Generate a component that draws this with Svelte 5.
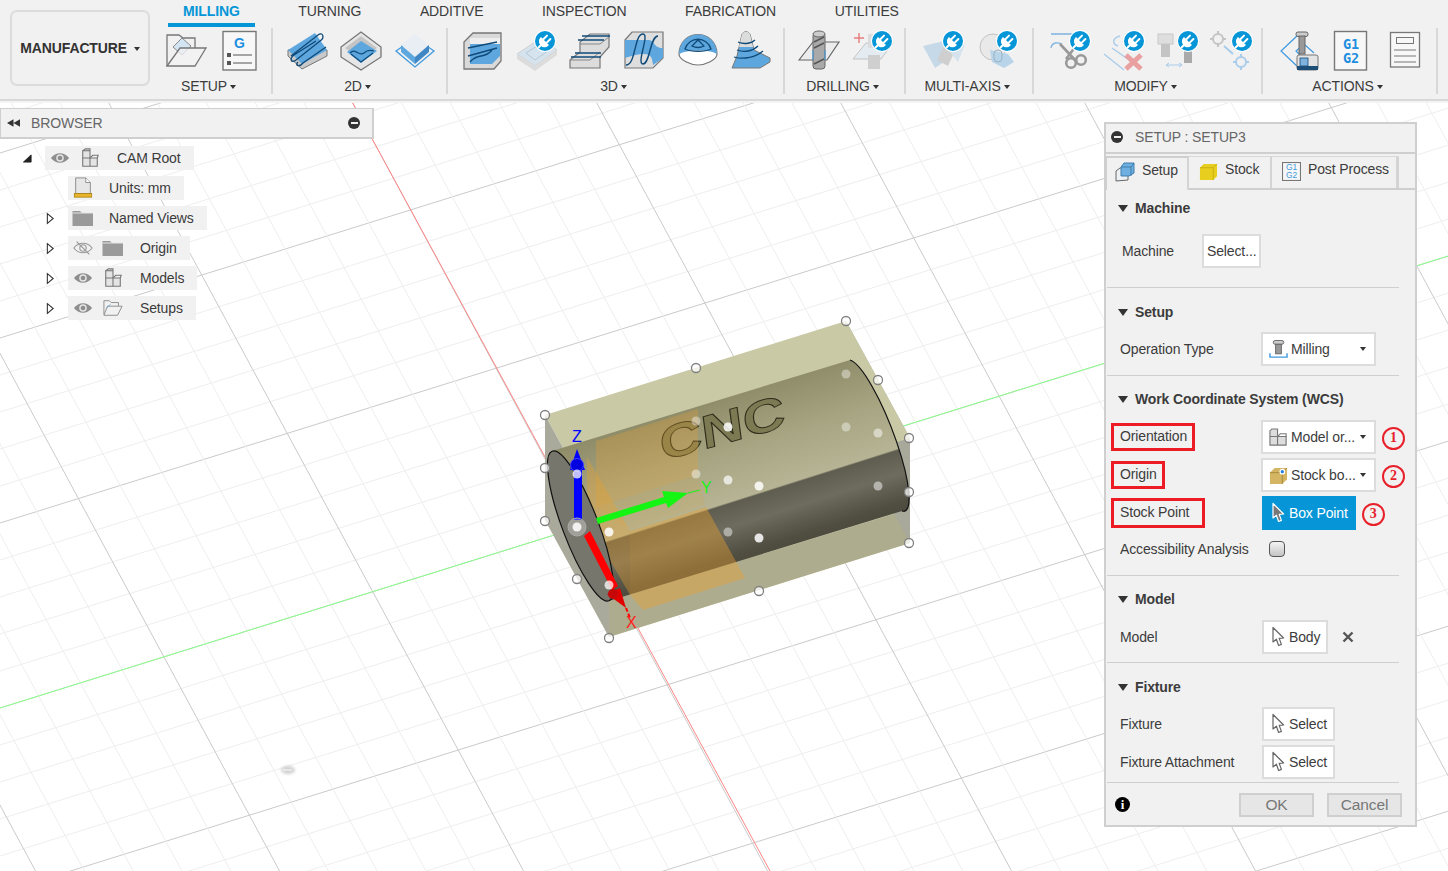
<script>
    // viewport grid: two families of parallel lines, every 5th line is a major one
    const across = []
    for (let k = -5; k < 45; k++) {
        const b = 338 + (k - 10) * 37
        across.push({ b, major: k % 5 === 0 })
    }
    const down = []
    for (let k = -25; k < 35; k++) {
        const c = 470 + k * 48.8
        down.push({ c, major: k % 5 === 0 })
    }

    const holes = [[846,321],[696,368],[545,415],[878,380],[909,438],[909,492],[909,543],[759,591],[609,638],[545,468],[545,521],[577,579]]
    // third value: how much the point shows through the body
    const dots = [[696,421,0.4],[728,427,0.85],[846,374,0.4],[846,427,0.4],[878,433,0.5],[696,474,0.45],[728,480,0.7],[759,486,0.85],[878,486,0.5],[728,532,0.45],[759,538,0.85],[609,532,0.85],[609,585,0.75],[577,474,0.75],[577,527,0.85]]

    const tree = [
        { name: 'CAM Root', icon: 'cube', eye: 'on', open: true, root: true },
        { name: 'Units: mm', icon: 'units' },
        { name: 'Named Views', icon: 'folder', arrow: true },
        { name: 'Origin', icon: 'folder', eye: 'off', arrow: true },
        { name: 'Models', icon: 'cube', eye: 'on', arrow: true },
        { name: 'Setups', icon: 'open', eye: 'on', arrow: true }
    ]
</script>

{#snippet plug()}
    <svg class="plug" viewBox="0 0 22 22">
        <circle cx="11" cy="11" r="11" fill="#fff"/>
        <circle cx="11" cy="11" r="10" fill="#0696d7"/>
        <path d="M4.5 17.5 L7.5 14.5 M7 8.5 L13.5 15 C11.5 17 9 16.5 7.5 15 C6 13.5 5 10.5 7 8.5 Z M9.6 9 L13 5.6 M13 12.4 L16.4 9" fill="#fff" stroke="#fff" stroke-width="2" stroke-linecap="round"/>
    </svg>
{/snippet}

{#snippet pointer()}
    <svg class="pointer" viewBox="0 0 14 22">
        <path d="M2 1.5 V16 L5.4 13.2 L7.6 19.5 L10.4 18.4 L8.2 12.4 L12.6 12 Z" fill="#fff" stroke="#666" stroke-width="1.2" stroke-linejoin="round"/>
    </svg>
{/snippet}

{#snippet cubeIcon()}
    <svg class="tree-icon" viewBox="0 0 22 22">
        <path d="M3 3 L6 1 H11 V11 H19 V20 H3 Z" fill="#e4e4e4" stroke="#777" stroke-width="1.2"/>
        <path d="M3 11 H11 V20 M11 11 L14 8 H20 L19 11" fill="none" stroke="#777" stroke-width="1.2"/>
        <path d="M3 3 H11" stroke="#777" stroke-width="1.2"/>
    </svg>
{/snippet}

{#snippet eye(off)}
    <svg class="tree-icon" viewBox="0 0 22 22">
        {#if off}
            <path d="M1 11 C6 4 16 4 21 11 C16 18 6 18 1 11 Z" fill="none" stroke="#999" stroke-width="1.2"/>
            <circle cx="11" cy="11" r="3.5" fill="none" stroke="#999" stroke-width="1.2"/>
            <path d="M4 4 L18 18" stroke="#999" stroke-width="1.3"/>
        {:else}
            <path d="M1 11 C6 4 16 4 21 11 C16 18 6 18 1 11 Z" fill="#8e8e8e"/>
            <circle cx="11" cy="11" r="4.2" fill="#e4e4e4"/>
            <circle cx="11" cy="11" r="2.6" fill="#8e8e8e"/>
        {/if}
    </svg>
{/snippet}

<div class="app">
    <!-- viewport: the model sits on a free canvas -->
    <svg class="scene" viewBox="0 0 1448 871">
        {#each across as l}
            <line x1="0" y1={l.b} x2="1448" y2={l.b - 0.312 * 1448} stroke={l.major ? '#cacaca' : '#eeeeee'}/>
        {/each}
        {#each down as l}
            <line x1={l.c + 0.54 * (100 - 320)} y1="100" x2={l.c + 0.54 * (871 - 320)} y2="871" stroke={l.major ? '#cacaca' : '#eeeeee'}/>
        {/each}
        <line x1="0" y1="708" x2="1448" y2="256" stroke="#8cff8c"/>
        <line x1="351" y1="100" x2="770" y2="871" stroke="#ff8585"/>
        <ellipse class="smudge" cx="288" cy="770" rx="7" ry="4" fill="#d0d0d0"/>
        <line x1="283" y1="770" x2="292" y2="770" stroke="#fff"/>

        <defs>
            <linearGradient id="body" gradientUnits="userSpaceOnUse" x1="702" y1="404" x2="755" y2="571">
                <stop offset="0" stop-color="#8f8c69"/>
                <stop offset="0.3" stop-color="#a6a481"/>
                <stop offset="0.58" stop-color="#b6b494"/>
                <stop offset="0.59" stop-color="#5f5d4f"/>
                <stop offset="0.72" stop-color="#6d6c5e"/>
                <stop offset="0.88" stop-color="#504d41"/>
                <stop offset="1" stop-color="#48453a"/>
            </linearGradient>
        </defs>

        <!-- stock box -->
        <polygon points="545,520 609,637 910,543 846,426" fill="#d3d3b4"/>
        <polygon points="609,637 910,543 900,512 609,601" fill="#aeac8e"/>
        <polygon points="846,321 910,438 910,543 846,426" fill="#a8a89b"/>
        <polygon points="545,415 846,321 910,438 609,532" fill="#c9c9a6"/>
        <polygon points="545,415 545,520 609,637 609,532" fill="#a9a99c"/>

        <!-- cylinder -->
        <path d="M552 451 L850 360 A 80 17 69 0 1 902 511 L609 601 Z" fill="url(#body)"/>
        <path d="M850 360 A 80 17 69 0 1 902 511" fill="none" stroke="#111" stroke-width="1.2"/>
        <text class="engraved" transform="translate(662,461) rotate(-15.5) skewX(-8) scale(1.3,1)" font-size="46">CNC</text>

        <!-- orange setup planes -->
        <polygon points="596,441 698,409 698,475 596,507" fill="#e8a030" fill-opacity="0.28"/>
        <polygon points="596,507 698,475 705,505 630,530" fill="#e8a030" fill-opacity="0.14"/>
        <polygon points="630,531 706,507 745,578 643,610 630,595" fill="#e8a030" fill-opacity="0.42"/>
        <polygon points="587,457 630,531 630,595 587,520" fill="#e8a030" fill-opacity="0.36"/>

        <ellipse cx="580.5" cy="526" rx="18" ry="80" transform="rotate(-20.8 580.5 526)" fill="#77766c" stroke="#111" stroke-width="1.2"/>

        <!-- axes -->
        <rect x="574" y="462" width="8" height="58" fill="#0000ff"/>
        <polygon points="577,449 570,470 585,470" fill="#0000ff"/>
        <circle cx="577" cy="465" r="6.5" fill="#0000e0" stroke="#4444ff"/>
        <text class="axis" x="572" y="442" fill="#0000ff">Z</text>
        <polygon points="596,518 664,497 662,491 688,493 668,508 666,503 598,524" fill="#14f514"/>
        <line x1="688" y1="493" x2="700" y2="490" stroke="#14f514"/>
        <text class="axis" x="701" y="493" fill="#14f514">Y</text>
        <polygon points="584,536 590,531 618,586 612,590" fill="#ff0000"/>
        <polygon points="607,594 620,588 626,608" fill="#e00000"/>
        <circle cx="613" cy="594" r="5" fill="#c80808"/>
        <line x1="626" y1="608" x2="630" y2="618" stroke="#ff0000" stroke-width="2" stroke-dasharray="4 2"/>
        <text class="axis" x="626" y="628" fill="#ff2020">X</text>

        {#each holes as [x, y]}
            <circle cx={x} cy={y} r="4.5" fill="#fff" fill-opacity="0.75" stroke="#808080" stroke-width="1.3"/>
        {/each}
        <circle cx="577" cy="527" r="9" fill="#fff" fill-opacity="0.3" stroke="#aaa"/>
        {#each dots as [x, y, o]}
            <circle cx={x} cy={y} r="4.5" fill="#fff" fill-opacity={o}/>
        {/each}
    </svg>

    <header class="toolbar">
        <button class="manufacture">MANUFACTURE <i class="caret"></i></button>
        <div class="ribbon">
            <nav class="tabs">
                <span class="tab active">MILLING</span>
                <span class="tab">TURNING</span>
                <span class="tab">ADDITIVE</span>
                <span class="tab">INSPECTION</span>
                <span class="tab">FABRICATION</span>
                <span class="tab">UTILITIES</span>
            </nav>
            <div class="groups">
                <section class="group">
                    <div class="tools">
                        <div class="tool"><svg viewBox="159 28 54 44">
                            <path d="M167 66 V35 H179 L183 38 H195 V48" fill="none" stroke="#777" stroke-width="1.3"/>
                            <path d="M173 47 L182 38 L191 46 L182 55 Z" fill="#d3e4f2" stroke="#888"/>
                            <path d="M167 66 L180 48 H206 L195 66 Z" fill="#f1f1f1" fill-opacity="0.75" stroke="#777" stroke-width="1.3"/>
                        </svg></div>
                        <div class="tool"><svg viewBox="213 28 54 44">
                            <rect x="223" y="31.5" width="33" height="38.5" fill="#f7f7f7" stroke="#777" stroke-width="1.4"/>
                            <text x="234" y="48" class="g-mark" font-size="14">G</text>
                            <rect x="227" y="53" width="4" height="4" fill="#555"/>
                            <rect x="227" y="61" width="4" height="4" fill="#555"/>
                            <path d="M233 55 H252 M233 63 H252" stroke="#555"/>
                        </svg></div>
                    </div>
                    <div class="label">SETUP<i class="caret"></i></div>
                </section>
                <section class="group">
                    <div class="tools">
                        <div class="tool"><svg viewBox="281 28 54 44">
                            <path d="M288 50 V56 L302 69 L327 56 V50 Z" fill="#c9c9c9" stroke="#777"/>
                            <polygon points="288,50 315,33 327,50 302,64" fill="#5ea7de"/>
                            <path d="M291 56 L318 35 C323 31 325 38 320 41 L296 60 C291 64 289 59 294 55 L316 41 M298 62 C294 66 300 67 303 63 L326 47" fill="none" stroke="#0f4a78" stroke-width="1.3"/>
                        </svg></div>
                        <div class="tool"><svg viewBox="335 28 54 44">
                            <polygon points="361,32 381,47 381,57 361,70 341,57 341,47" fill="#e6e6e6" stroke="#777" stroke-width="1.3"/>
                            <polygon points="361,36 377,48 361,60 345,48" fill="#c4c4c4"/>
                            <polygon points="361,41 377,51 361,63 347,52" fill="#5ea7de"/>
                            <path d="M350 53 C356 47 358 57 364 53 C367 50 371 50 374 51 M351 54 L361 62 L373 53" fill="none" stroke="#0f4a78" stroke-width="1.2"/>
                        </svg></div>
                        <div class="tool"><svg viewBox="389 28 54 44">
                            <polygon points="396,51 415,38 434,51 415,67" fill="none" stroke="#3f9ae0" stroke-width="1.3"/>
                            <polygon points="401,45 415,34 429,45 415,57" fill="#e8eef4"/>
                            <polygon points="401,45 415,57 415,64 401,52" fill="#5ea7de"/>
                            <polygon points="429,45 415,57 415,64 429,52" fill="#3f87c4"/>
                        </svg></div>
                    </div>
                    <div class="label">2D<i class="caret"></i></div>
                </section>
                <section class="group">
                    <div class="tools">
                        <div class="tool"><svg viewBox="455 28 54 44">
                            <path d="M464 42 L473 33 H501 V61 L494 69 H464 Z" fill="#d9d9d9" stroke="#777" stroke-width="1.3"/>
                            <path d="M470 38 H500 V44 H470 Z" fill="#eee"/>
                            <path d="M470 44 H500 V56 L492 64 H470 Z" fill="#5ea7de"/>
                            <path d="M468 48 L497 42 M468 56 L497 48 M470 62 C478 52 484 60 492 50" fill="none" stroke="#0f4a78" stroke-width="1.3"/>
                        </svg></div>
                        <div class="tool"><svg viewBox="509 28 54 44">
                            <g opacity="0.38">
                                <polygon points="517,54 541,38 557,50 535,66" fill="#a9cdea" stroke="#999"/>
                                <polygon points="517,54 535,66 557,50 557,55 535,71 517,59" fill="#bbb"/>
                                <path d="M526 53 L540 44 L549 50 L535 60 Z" fill="none" stroke="#5a86aa"/>
                            </g>
                        </svg>{@render plug()}</div>
                        <div class="tool"><svg viewBox="563 28 54 44">
                            <path d="M570 60 L580 52 L580 42 L590 34 H609 V47 L600 57 V68 H570 Z" fill="#dcdcdc" stroke="#777" stroke-width="1.2"/>
                            <path d="M580 44 H600 L609 37 M570 60 H590 L600 52" fill="none" stroke="#888"/>
                            <path d="M578 40 H604 M582 36 H610 M571 57 H601 M575 53 H601" stroke="#0f4a78" stroke-width="1.4"/>
                        </svg></div>
                        <div class="tool"><svg viewBox="617 28 54 44">
                            <path d="M625 40 L632 32 H663 V58 L653 68 H625 Z" fill="#dedede" stroke="#777" stroke-width="1.2"/>
                            <path d="M625 40 H648 C655 40 653 48 663 48 V58 L653 65 C652 55 650 50 625 58 Z" fill="#5ea7de"/>
                            <path d="M626 65 C636 65 634 34 643 34 C650 34 636 64 643 64 C650 64 650 36 658 36" fill="none" stroke="#0f4a78" stroke-width="1.4"/>
                        </svg></div>
                        <div class="tool"><svg viewBox="671 28 54 44">
                            <path d="M679 54 C680 28 716 28 717 54 C717 60 705 65 698 65 C691 65 679 60 679 54 Z" fill="#fff" stroke="#777" stroke-width="1.2"/>
                            <path d="M679 54 C680 28 716 28 717 54 C708 49 690 49 679 54 Z" fill="#5ea7de"/>
                            <path d="M685 49 C689 36 707 36 711 49 C705 52 691 52 685 49 Z M692 46 L698 40 L704 46 C700 48 696 48 692 46 Z" fill="none" stroke="#0f4a78" stroke-width="1.3"/>
                        </svg></div>
                        <div class="tool"><svg viewBox="725 28 54 44">
                            <path d="M732 68 L737 56 L742 34 C744 31 748 31 750 34 L754 50 L770 58 V62 L760 68 Z" fill="#5ea7de" stroke="#777"/>
                            <path d="M742 34 C744 31 748 31 750 34 L753 47 L739 47 Z" fill="#dcdcdc"/>
                            <path d="M738 42 C745 45 752 43 755 40 M737 50 C744 53 753 51 758 46 M734 57 C744 60 756 57 763 51" fill="none" stroke="#0f4a78" stroke-width="1.3"/>
                        </svg></div>
                    </div>
                    <div class="label">3D<i class="caret"></i></div>
                </section>
                <section class="group">
                    <div class="tools">
                        <div class="tool"><svg viewBox="792 28 54 44">
                            <path d="M799 60 L813 42 H839 L827 60 Z" fill="#ececec" stroke="#666" stroke-width="1.2"/>
                            <rect x="813" y="33" width="12" height="36" rx="3" fill="#a9a9a9" stroke="#666"/>
                            <ellipse cx="819" cy="34" rx="6" ry="3" fill="#ccc" stroke="#666"/>
                            <path d="M814 42 L824 37 M814 48 L824 43 M814 64 L824 59" stroke="#555" stroke-width="1.6"/>
                            <path d="M813 50 V60 M825 50 V60" stroke="#3f9ae0"/>
                        </svg></div>
                        <div class="tool"><svg viewBox="846 28 54 44">
                            <path d="M854 38 H864 M859 33 V43" stroke="#e03030" stroke-width="1.4" opacity="0.6"/>
                            <g opacity="0.38">
                                <path d="M853 59 L866 43 H893 L881 59 Z" fill="#d3e4f2" stroke="#777"/>
                                <rect x="868" y="55" width="12" height="14" fill="#999"/>
                                <rect x="868" y="34" width="12" height="14" fill="#bbb"/>
                            </g>
                        </svg>{@render plug()}</div>
                    </div>
                    <div class="label">DRILLING<i class="caret"></i></div>
                </section>
                <section class="group">
                    <div class="tools">
                        <div class="tool"><svg viewBox="917 28 54 44">
                            <g opacity="0.38">
                                <polygon points="923,46 948,40 950,58 935,68" fill="#7fb3de"/>
                                <path d="M937 60 L950 34 L960 40 L948 66 Z" fill="#999"/>
                                <polygon points="950,52 965,44 958,62" fill="#a9cdea"/>
                            </g>
                        </svg>{@render plug()}</div>
                        <div class="tool"><svg viewBox="971 28 54 44">
                            <g opacity="0.38">
                                <circle cx="993" cy="47" r="13" fill="#ddd" stroke="#777"/>
                                <path d="M990 50 L1008 54 L1014 62 L1004 68 L992 62 Z" fill="#5ea7de"/>
                                <rect x="994" y="50" width="8" height="12" rx="4" fill="none" stroke="#0f4a78"/>
                            </g>
                        </svg>{@render plug()}</div>
                    </div>
                    <div class="label">MULTI-AXIS<i class="caret"></i></div>
                </section>
                <section class="group">
                    <div class="tools">
                        <div class="tool"><svg viewBox="1044 28 54 44">
                            <path d="M1051 34 H1075 M1051 48 C1052 42 1058 42 1062 44" fill="none" stroke="#7fb3de" stroke-width="1.3"/>
                            <path d="M1060 44 L1076 61 M1076 46 L1066 59" stroke="#999" stroke-width="2.6"/>
                            <circle cx="1071" cy="63" r="4.8" fill="none" stroke="#999" stroke-width="2.6"/>
                            <circle cx="1081" cy="60" r="4.8" fill="none" stroke="#999" stroke-width="2.6"/>
                        </svg>{@render plug()}</div>
                        <div class="tool"><svg viewBox="1098 28 54 44">
                            <path d="M1104 54 L1124 70 M1112 48 L1132 62 M1120 36 C1112 38 1112 44 1118 46" fill="none" stroke="#a9cdea" stroke-width="1.4"/>
                            <path d="M1126 55 L1141 69 M1141 55 L1126 69" stroke="#e9a0a0" stroke-width="5"/>
                        </svg>{@render plug()}</div>
                        <div class="tool"><svg viewBox="1152 28 54 44">
                            <rect x="1158" y="34" width="15" height="10" fill="#dedede" stroke="#c8c8c8"/>
                            <rect x="1161" y="44" width="9" height="13" fill="#c4c4c4"/>
                            <rect x="1184" y="48" width="8" height="15" fill="#aaa"/>
                            <path d="M1166 65 H1182 M1166 65 L1169 63 M1166 65 L1169 67 M1182 65 L1179 63 M1182 65 L1179 67" fill="none" stroke="#a9cdea"/>
                        </svg>{@render plug()}</div>
                        <div class="tool"><svg viewBox="1206 28 54 44">
                            <g fill="none" stroke="#c4c4c4" stroke-width="2">
                                <circle cx="1218" cy="39" r="5"/>
                                <path d="M1218 31 V34 M1218 44 V47 M1210 39 H1213 M1223 39 H1226"/>
                            </g>
                            <g fill="none" stroke="#a9cdea" stroke-width="2">
                                <circle cx="1241" cy="62" r="5"/>
                                <path d="M1241 54 V57 M1241 67 V70 M1233 62 H1236 M1246 62 H1249 M1224 46 L1233 54"/>
                            </g>
                        </svg>{@render plug()}</div>
                    </div>
                    <div class="label">MODIFY<i class="caret"></i></div>
                </section>
                <section class="group">
                    <div class="tools">
                        <div class="tool"><svg viewBox="1273 28 54 44">
                            <path d="M1298 35 L1281 51 L1298 67 M1303 45 L1296 51 L1303 58 M1305 45 L1314 53" fill="none" stroke="#3f9ae0" stroke-width="1.2"/>
                            <rect x="1296" y="32" width="12" height="4.5" rx="2" fill="#ccc" stroke="#666"/>
                            <rect x="1299" y="36" width="6" height="18" fill="#999" stroke="#666"/>
                            <rect x="1297" y="55" width="21" height="15" rx="2" fill="#e4e4e4" stroke="#777"/>
                            <rect x="1300" y="58" width="8" height="8" fill="#7fb3de" stroke="#0f4a78" stroke-width="0.8"/>
                            <rect x="1297" y="66" width="21" height="4" fill="#1d4e78"/>
                        </svg></div>
                        <div class="tool"><svg viewBox="1327 28 54 44">
                            <rect x="1334.5" y="31.5" width="32" height="38.5" fill="#f7f7f7" stroke="#777" stroke-width="1.4"/>
                            <text x="1351" y="49" class="g-code" font-size="13.5">G1</text>
                            <text x="1351" y="63" class="g-code" font-size="13.5">G2</text>
                        </svg></div>
                        <div class="tool"><svg viewBox="1381 28 54 44">
                            <rect x="1390.5" y="32.5" width="29" height="34.5" fill="#f7f7f7" stroke="#777" stroke-width="1.3"/>
                            <rect x="1396.5" y="37.5" width="17" height="6" fill="none" stroke="#777"/>
                            <path d="M1394 50 H1416 M1394 56 H1416 M1394 62 H1416" stroke="#777"/>
                        </svg></div>
                    </div>
                    <div class="label">ACTIONS<i class="caret"></i></div>
                </section>
            </div>
        </div>
    </header>

    <aside class="browser">
        <div class="browser-head">
            <svg class="rewind" viewBox="0 0 14 8"><path d="M7 0 V8 L0 4 Z M14 0 V8 L7 4 Z" fill="#333"/></svg>
            <span class="browser-title">BROWSER</span>
            <span class="minus"></span>
        </div>
        <ul class="tree">
            {#each tree as node}
                <li class="node" class:root={node.root}>
                    <span class="expander">
                        {#if node.open}
                            <svg viewBox="0 0 10 10"><path d="M0.5 9 H9 V1 Z" fill="#222" stroke="#222"/></svg>
                        {:else if node.arrow}
                            <svg viewBox="0 0 10 14"><path d="M1.5 1.5 L8 7 L1.5 12.5 Z" fill="#fff" stroke="#333" stroke-width="1.2"/></svg>
                        {/if}
                    </span>
                    <span class="pill">
                        {#if node.eye}
                            <span class="slot">{@render eye(node.eye === 'off')}</span>
                        {/if}
                        <span class="slot">
                            {#if node.icon === 'cube'}
                                {@render cubeIcon()}
                            {:else if node.icon === 'units'}
                                <svg class="tree-icon large" viewBox="0 0 22 24">
                                    <path d="M3 1 H14 L19 6 V18 H3 Z" fill="#e6e6e6" stroke="#888"/>
                                    <path d="M14 1 V6 H19" fill="#fff" stroke="#888"/>
                                    <rect x="1.5" y="18" width="19" height="4" fill="#e9b32a" stroke="#a67c10" stroke-width="0.8"/>
                                </svg>
                            {:else if node.icon === 'folder'}
                                <svg class="tree-icon large" viewBox="0 0 22 20">
                                    <path d="M0.5 3 H8 L10 5 H21 V18 H0.5 Z" fill="#9a9a9a"/>
                                    <path d="M0.5 5 H21" stroke="#e4e4e4"/>
                                </svg>
                            {:else}
                                <svg class="tree-icon" viewBox="0 0 22 20">
                                    <path d="M1 17 V2 H7 L9 4 H17 V8" fill="none" stroke="#888"/>
                                    <path d="M1 18 L5 8 H21 L16 18 Z" fill="#f1f1f1" stroke="#888"/>
                                    <path d="M4 10 L8 6" stroke="#5ea7de"/>
                                </svg>
                            {/if}
                        </span>
                        <span class="node-name">{node.name}</span>
                    </span>
                </li>
            {/each}
        </ul>
    </aside>

    <aside class="panel">
        <div class="panel-head">
            <span class="minus"></span>
            <span class="panel-title">SETUP : SETUP3</span>
        </div>
        <div class="panel-tabs">
            <span class="ptab active">
                <svg class="ptab-icon" viewBox="0 0 20 20">
                    <path d="M1 9 L5 6 H13 V18 L1 19 Z" fill="#eef1f4" stroke="#666"/>
                    <path d="M6 5 L9 1 H19 V11 L14 14 H6 Z" fill="#6fb0e0" stroke="#3f7eb0"/>
                    <path d="M6 5 H16 L19 1 M16 5 V14" fill="none" stroke="#3f7eb0"/>
                </svg>
                Setup
            </span>
            <span class="ptab">
                <svg class="ptab-icon" viewBox="0 0 20 20">
                    <path d="M1 6 L5 2 H19 V15 L15 19 H1 Z" fill="#e8cf1f"/>
                    <path d="M1 6 H15 L19 2 M15 6 V19" fill="none" stroke="#c9b010"/>
                </svg>
                Stock
            </span>
            <span class="ptab">
                <svg class="ptab-icon" viewBox="0 0 18 18">
                    <rect x="0.5" y="0.5" width="17" height="17" fill="#f7f7f7" stroke="#777"/>
                    <text x="9" y="8" class="g-small">G1</text>
                    <text x="9" y="15" class="g-small">G2</text>
                </svg>
                Post Process
            </span>
        </div>

        <section class="block first">
            <h3 class="block-title"><i class="tri"></i>Machine</h3>
            <div class="row compact">
                <span class="name">Machine</span>
                <span class="box plain">Select...</span>
            </div>
        </section>

        <section class="block second">
            <h3 class="block-title"><i class="tri"></i>Setup</h3>
            <div class="row">
                <span class="name">Operation Type</span>
                <span class="box dropdown">
                    <svg class="box-icon" viewBox="0 0 20 20">
                        <rect x="4.5" y="0.5" width="11" height="4" rx="2" fill="#ccc" stroke="#666"/>
                        <rect x="7" y="4.5" width="6" height="10" fill="#999" stroke="#666"/>
                        <path d="M1 14 V18 H19 V14" fill="none" stroke="#3f9ae0" stroke-width="1.5"/>
                    </svg>
                    <span class="grow">Milling</span><i class="caret"></i>
                </span>
            </div>
        </section>

        <section class="block rows">
            <h3 class="block-title"><i class="tri"></i>Work Coordinate System (WCS)</h3>
            <div class="row">
                <span class="name"><span class="mark">Orientation</span></span>
                <span class="box dropdown">
                    <svg class="box-icon" viewBox="0 0 20 20">
                        <path d="M1 3 L3 1 H9 V9 H18 V18 H1 Z" fill="#ddd" stroke="#777" stroke-width="1.2"/>
                        <path d="M1 9 H9 V18 M9 9 L12 6 H18 V9" fill="none" stroke="#777" stroke-width="1.2"/>
                    </svg>
                    <span class="grow">Model or...</span><i class="caret"></i>
                </span>
                <span class="num">1</span>
            </div>
            <div class="row">
                <span class="name"><span class="mark">Origin</span></span>
                <span class="box dropdown">
                    <svg class="box-icon" viewBox="0 0 20 20">
                        <path d="M1 7 L6 2 H19 V14 L14 19 H1 Z" fill="#d3b564"/>
                        <path d="M1 7 H14 L19 2 M14 7 V19" fill="none" stroke="#a88a3c"/>
                        <circle cx="14" cy="6" r="3" fill="#fff"/>
                        <circle cx="14" cy="6" r="1.7" fill="#1f7fdd"/>
                    </svg>
                    <span class="grow">Stock bo...</span><i class="caret"></i>
                </span>
                <span class="num">2</span>
            </div>
            <div class="row">
                <span class="name"><span class="mark wide">Stock Point</span></span>
                <span class="box pick active">{@render pointer()}Box Point</span>
                <span class="num near">3</span>
            </div>
            <div class="row short">
                <span class="name">Accessibility Analysis</span>
                <span class="check"></span>
            </div>
        </section>

        <section class="block">
            <h3 class="block-title"><i class="tri"></i>Model</h3>
            <div class="row">
                <span class="name">Model</span>
                <span class="box pick">{@render pointer()}Body</span>
                <svg class="clear" viewBox="0 0 12 12"><path d="M1.5 1.5 L10.5 10.5 M10.5 1.5 L1.5 10.5" stroke="#555" stroke-width="2.4"/></svg>
            </div>
        </section>

        <section class="block last">
            <h3 class="block-title"><i class="tri"></i>Fixture</h3>
            <div class="row">
                <span class="name">Fixture</span>
                <span class="box pick">{@render pointer()}Select</span>
            </div>
            <div class="row">
                <span class="name">Fixture Attachment</span>
                <span class="box pick">{@render pointer()}Select</span>
            </div>
        </section>

        <footer class="panel-foot">
            <span class="info">i</span>
            <span class="foot-btn ok">OK</span>
            <span class="foot-btn cancel">Cancel</span>
        </footer>
    </aside>
</div>

<style>
    :global(body) {
        margin: 0;
        background: #fff;
        font-family: "Liberation Sans", Arial, sans-serif;
        color: #3c3c3c;
    }

    .app {
        position: relative;
        width: 1448px;
        height: 871px;
        overflow: hidden;
        background: #fff;
        font-size: 14px;
        letter-spacing: -0.13px;
    }

    .scene {
        position: absolute;
        inset: 0;
        width: 1448px;
        height: 871px;
    }

    .smudge {
        filter: blur(1.5px);
    }

    .engraved {
        font-family: "Liberation Sans", Arial, sans-serif;
        font-weight: bold;
        fill: #7c7a52;
        stroke: #2e2d1c;
        stroke-width: 0.9;
    }

    .axis {
        font-family: "Liberation Sans", Arial, sans-serif;
        font-size: 16px;
    }

    /* toolbar */
    .toolbar {
        position: relative;
        display: flex;
        height: 99px;
        background: #f1f1f1;
        border-bottom: 2px solid #d8d8d8;
        box-shadow: 0 2px 0 #f4f4f4;
    }

    .manufacture {
        width: 140px;
        height: 76px;
        margin: 10px 4px 0 10px;
        padding: 0;
        flex: none;
        background: #f1f1f1;
        border: 2px solid #dcdcdc;
        border-radius: 7px;
        font: bold 14px "Liberation Sans", Arial, sans-serif;
        letter-spacing: -0.13px;
        color: #333;
    }

    .caret {
        display: inline-block;
        width: 0;
        height: 0;
        margin-left: 3px;
        vertical-align: 2px;
        border-left: 3.5px solid transparent;
        border-right: 3.5px solid transparent;
        border-top: 4px solid #333;
    }

    .ribbon {
        flex: 1;
        display: flex;
        flex-direction: column;
    }

    .tabs {
        display: flex;
        height: 27px;
        padding-left: 14px;
        gap: 28.7px;
    }

    .tab {
        padding: 3px 15px 0;
        height: 20px;
        line-height: 16px;
        border-bottom: 4px solid transparent;
        white-space: nowrap;
    }

    .tab.active {
        color: #0696d7;
        font-weight: bold;
        border-bottom-color: #0696d7;
    }

    .groups {
        display: grid;
        grid-template-columns: 119px 175px 337px 121px 128px 229px 175px;
        margin-top: 1px;
    }

    .group {
        height: 66px;
        border-right: 2px solid #d8d8d8;
    }

    .tools {
        display: flex;
        height: 44px;
    }

    .group:nth-child(1) .tools { padding-left: 5px; }
    .group:nth-child(2) .tools { padding-left: 8px; }
    .group:nth-child(3) .tools { padding-left: 7px; }
    .group:nth-child(4) .tools { padding-left: 7px; }
    .group:nth-child(5) .tools { padding-left: 11px; }
    .group:nth-child(6) .tools { padding-left: 10px; }
    .group:nth-child(7) .tools { padding-left: 10px; }

    .tool {
        position: relative;
        width: 54px;
        height: 44px;
    }

    .tool > svg:first-child {
        display: block;
        width: 54px;
        height: 44px;
    }

    .plug {
        position: absolute;
        left: 25px;
        top: 2px;
        width: 22px;
        height: 22px;
    }

    .label {
        margin-top: 6px;
        padding-right: 4px;
        text-align: center;
        line-height: 16px;
        white-space: nowrap;
    }

    .group:first-child .label {
        padding-right: 8px;
    }

    .g-mark {
        font-family: "Liberation Sans", Arial, sans-serif;
        font-weight: bold;
        fill: #1e8fe0;
    }

    .g-code {
        font-family: "DejaVu Sans Mono", "Liberation Mono", monospace;
        font-weight: bold;
        fill: #1e8fe0;
        text-anchor: middle;
    }

    .g-small {
        font-family: "Liberation Sans", Arial, sans-serif;
        font-size: 8px;
        fill: #3f9ae0;
        text-anchor: middle;
    }

    /* browser */
    .browser {
        position: absolute;
        left: 0;
        top: 108px;
        width: 374px;
    }

    .browser-head {
        display: flex;
        align-items: center;
        box-sizing: border-box;
        height: 31px;
        padding: 0 12px 0 6px;
        background: #f1f1f1;
        border: 1px solid #cfcfcf;
        border-width: 1px 2px 2px 1px;
    }

    .rewind {
        width: 13px;
        height: 8px;
    }

    .browser-title {
        flex: 1;
        margin-left: 11px;
        color: #666;
    }

    .minus {
        position: relative;
        flex: none;
        width: 12px;
        height: 12px;
        border-radius: 50%;
        background: #333;
    }

    .minus::after {
        content: "";
        position: absolute;
        left: 2.5px;
        top: 5px;
        width: 7px;
        height: 2px;
        background: #f1f1f1;
    }

    .tree {
        list-style: none;
        margin: 7px 0 0;
        padding: 0 0 0 46px;
    }

    .node {
        display: flex;
        align-items: center;
        height: 24px;
        margin-bottom: 6px;
    }

    .node.root {
        margin-left: -23px;
    }

    .expander {
        flex: none;
        display: flex;
        width: 22px;
    }

    .expander svg {
        width: 9px;
        height: 13px;
    }

    .pill {
        display: flex;
        align-items: center;
        height: 24px;
        background: #f1f1f1;
    }

    .slot {
        display: flex;
        justify-content: center;
        width: 30px;
    }

    .tree-icon {
        display: block;
        width: 20px;
        height: 20px;
    }

    .tree-icon.large {
        width: 22px;
        height: 22px;
    }

    .node-name {
        padding: 0 13px 0 11px;
        white-space: nowrap;
    }

    .slot + .slot + .node-name {
        padding-left: 12px;
    }

    /* setup panel */
    .panel {
        position: absolute;
        left: 1104px;
        top: 122px;
        box-sizing: border-box;
        width: 313px;
        height: 705px;
        display: flex;
        flex-direction: column;
        background: #f1f1f1;
        border: 2px solid #cfcfcf;
    }

    .panel-head {
        display: flex;
        align-items: center;
        flex: none;
        box-sizing: content-box;
        height: 26px;
        padding: 0 0 2px 5px;
        border-bottom: 2px solid #cfcfcf;
    }

    .panel-title {
        margin-left: 12px;
        color: #666;
    }

    .panel-tabs {
        display: flex;
        flex: none;
        height: 32px;
        margin-top: 2px;
        border-bottom: 2px solid #cfcfcf;
    }

    .ptab {
        box-sizing: border-box;
        display: flex;
        align-items: center;
        gap: 7px;
        height: 32px;
        width: 83px;
        padding: 0 0 7px 10px;
        border-right: 2px solid #d4d4d4;
        border-top: 1px solid #d8d8d8;
        white-space: nowrap;
    }

    .ptab:last-child {
        width: 127px;
        border-right-width: 3px;
    }

    .ptab.active {
        position: relative;
        height: 34px;
        padding: 0 0 9px 8px;
        background: #f1f1f1;
        border-left: 1px solid #cfcfcf;
        border-top: 2px solid #cfcfcf;
    }

    .ptab-icon {
        flex: none;
        width: 19px;
        height: 19px;
        margin-top: 4px;
    }

    .ptab.active .ptab-icon {
        width: 20px;
        height: 20px;
    }

    .block {
        flex: none;
        width: 292px;
        margin-left: 1px;
        padding: 11px 0 8px;
        border-bottom: 1px solid #cfcfcf;
    }

    .block.first {
        padding: 6px 0 19px;
    }

    .block.second {
        padding: 12px 0 9px;
    }

    .block.second .block-title {
        margin-bottom: 8px;
    }

    .block.rows {
        padding-bottom: 11px;
    }

    .block.rows .row + .row {
        margin-top: 4px;
    }

    .block.last {
        padding: 12px 0 3px;
    }

    .block.last .block-title {
        margin-bottom: 8px;
    }

    .block.last .row + .row {
        margin-top: 4px;
    }

    .block-title {
        display: flex;
        align-items: center;
        height: 24px;
        margin: 0 0 9px;
        padding-left: 11px;
        font-size: 14px;
        font-weight: bold;
    }

    .block.first .block-title {
        margin-bottom: 14px;
    }

    .tri {
        width: 0;
        height: 0;
        margin-right: 7px;
        border-left: 5px solid transparent;
        border-right: 5px solid transparent;
        border-top: 7px solid #333;
    }

    .row {
        display: flex;
        align-items: center;
        height: 34px;
        padding-left: 13px;
    }

    .row.short {
        height: 30px;
    }

    .row.compact .name {
        box-sizing: border-box;
        width: 82px;
        padding-left: 2px;
    }

    .name {
        flex: none;
        width: 141px;
        white-space: nowrap;
    }

    .mark {
        display: inline-block;
        margin-left: -6px;
        padding: 2px 5px 3px 6px;
        line-height: 17px;
        outline: 3px solid #ed1c24;
    }

    .mark.wide {
        padding: 3px 13px 4px 6px;
    }

    .box {
        box-sizing: border-box;
        display: flex;
        flex: none;
        align-items: center;
        height: 34px;
        background: #fff;
        border: 2px solid #dcdcdc;
        white-space: nowrap;
    }

    .plain {
        padding: 0 3px;
    }

    .dropdown {
        width: 115px;
        padding: 0 8px 0 6px;
    }

    .box-icon {
        flex: none;
        width: 19px;
        height: 19px;
        margin-right: 3px;
    }

    .grow {
        flex: 1;
    }

    .pick {
        margin-left: 1px;
        padding: 0 6px 0 7px;
    }

    .pick.active {
        background: #0696d7;
        border-color: #0696d7;
        color: #fff;
    }

    .pointer {
        flex: none;
        width: 14px;
        height: 22px;
        margin-right: 4px;
    }

    .pick.active .pointer path {
        fill: #777;
        stroke: #fff;
    }

    .num {
        flex: none;
        box-sizing: border-box;
        width: 23px;
        height: 23px;
        margin: 2px 0 0 6px;
        border: 2.5px solid #e8202a;
        border-radius: 50%;
        color: #e8202a;
        font: bold 14px/18px "Liberation Serif", serif;
        text-align: center;
    }

    .check {
        box-sizing: border-box;
        margin-left: 8px;
        width: 16px;
        height: 16px;
        border: 1.5px solid #555;
        border-radius: 4px;
        background: linear-gradient(#f4f4f4, #c4c4c4);
    }

    .clear {
        flex: none;
        width: 12px;
        height: 12px;
        margin-left: 14px;
    }

    .panel-foot {
        flex: 1;
        display: flex;
        align-items: center;
        padding-top: 1px;
    }

    .info {
        width: 15px;
        height: 15px;
        margin-left: 9px;
        border-radius: 50%;
        background: #000;
        color: #fff;
        font: bold 13px/15px "Liberation Serif", serif;
        text-align: center;
    }

    .foot-btn {
        box-sizing: border-box;
        height: 24px;
        background: #e6e6e6;
        border: 2px solid #cfcfcf;
        color: #777;
        font-size: 15.5px;
        line-height: 20px;
        text-align: center;
    }

    .ok {
        width: 75px;
        margin-left: 109px;
    }

    .cancel {
        width: 75px;
        margin-left: 13px;
    }
</style>
